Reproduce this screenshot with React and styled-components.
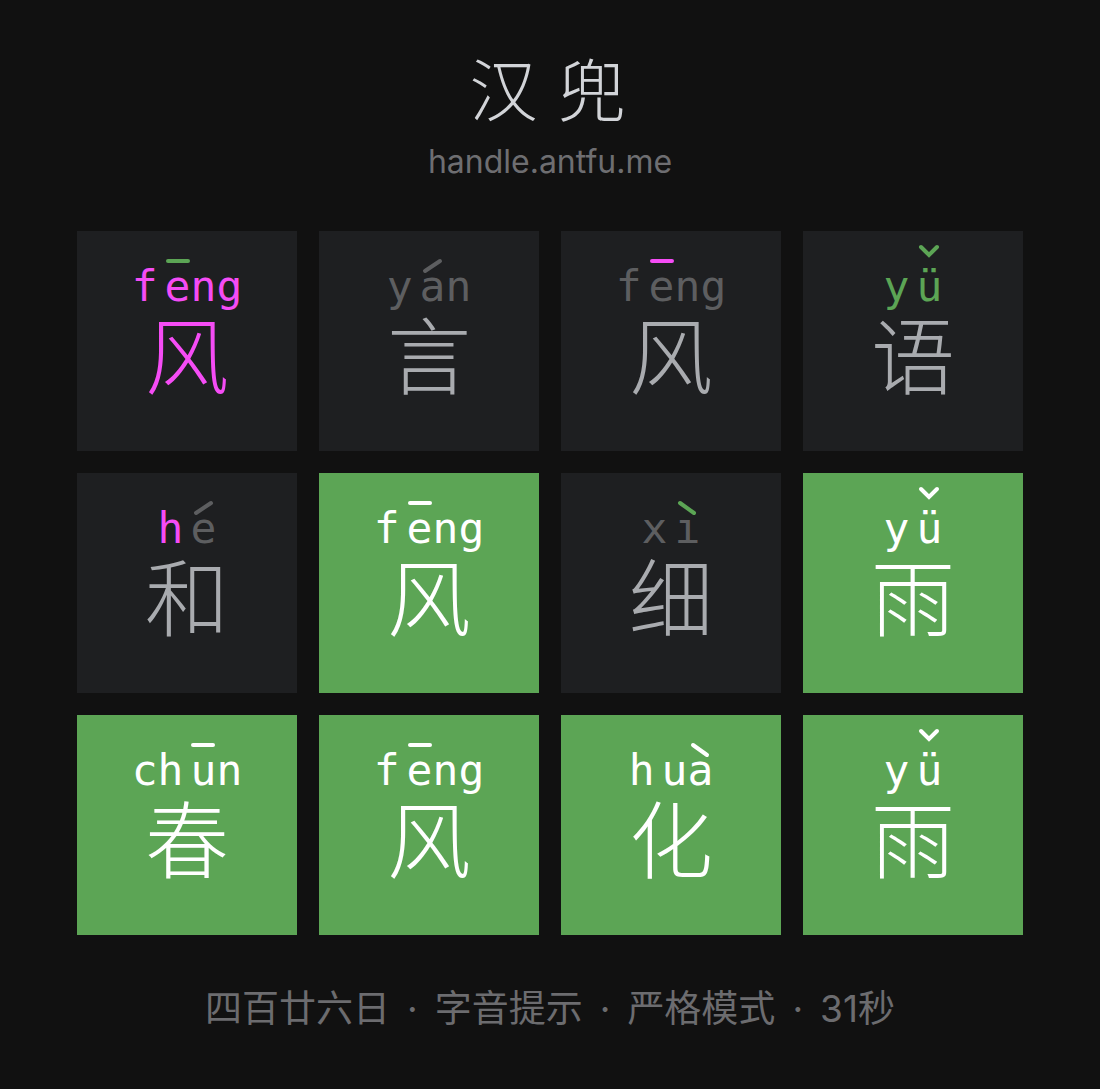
import React from "react";
import styled, { createGlobalStyle } from "styled-components";

const Global = createGlobalStyle`
  html, body { margin: 0; padding: 0; background: #111111; }
  body { font-family: "Inter", "Noto Sans CJK SC", sans-serif; }
`;

const C = {
  magenta: "#f54cf5",
  green: "#5ca555",
  gray: "#5d5e60",
  char: "#a9abaf",
  white: "#ffffff",
};

const Page = styled.div`
  width: 1100px;
  min-height: 1089px;
  display: flex;
  flex-direction: column;
  align-items: center;
  padding-top: 46px;
  box-sizing: border-box;
`;

const Title = styled.h1`
  margin: 0;
  font-family: "Noto Sans CJK SC", sans-serif;
  font-weight: 300;
  font-size: 68px;
  line-height: 82px;
  letter-spacing: 20px;
  padding-left: 15px;
  color: #d2d4d8;
`;

const Subtitle = styled.div`
  margin-top: 14px;
  font-family: "Inter", sans-serif;
  font-size: 32px;
  line-height: 40px;
  color: #6e6e71;
`;

const Grid = styled.div`
  margin-top: 49px;
  display: grid;
  grid-template-columns: repeat(4, 220px);
  grid-auto-rows: 220px;
  gap: 22px;
`;

const Cell = styled.div`
  background: ${(p) => (p.$ok ? C.green : "#1e1f21")};
  display: flex;
  flex-direction: column;
  align-items: center;
  padding-top: 30px;
  box-sizing: border-box;
`;

const Pinyin = styled.div`
  display: flex;
  align-items: baseline;
  gap: 7px;
  font-family: "DejaVu Sans Mono", monospace;
  font-size: 43px;
  line-height: 50px;
  height: 50px;
`;

const Part = styled.span`
  display: flex;
  color: ${(p) => p.$color};
`;

const Letter = styled.span`
  position: relative;
  color: ${(p) => p.$color};
`;

const ToneMark = styled.svg`
  position: absolute;
  left: 50%;
  top: ${(p) => p.$top}px;
  transform: translateX(-50%);
  overflow: visible;
`;

const Hanzi = styled.div`
  margin-top: -6px;
  font-family: "Noto Sans CJK SC", sans-serif;
  font-weight: 300;
  font-size: 84px;
  line-height: 94px;
  color: ${(p) => p.$color};
`;

const Footer = styled.div`
  margin-top: 49px;
  display: flex;
  align-items: center;
  font-family: "Inter", "Noto Sans CJK SC", sans-serif;
  font-size: 37px;
  line-height: 50px;
  color: #6c6c6f;
`;

const Dot = styled.span`
  margin: 0 17px;
`;

function Tone({ tone, color, umlaut }) {
  const top = umlaut ? -15 : -1;
  const sw = 4;
  let path;
  if (tone === 1) path = <line x1="-10" y1="0" x2="10" y2="0" />;
  else if (tone === 2) path = <line x1="-7" y1="10" x2="8" y2="0" />;
  else if (tone === 3) path = <polyline points="-8,0 0,8 8,0" />;
  else path = <line x1="-7" y1="0" x2="7" y2="10" />;
  return (
    <ToneMark
      $top={top}
      width="20"
      height="12"
      viewBox="-10 -1 20 12"
      stroke={color}
      strokeWidth={sw}
      strokeLinecap="round"
      fill="none"
    >
      {path}
    </ToneMark>
  );
}

const rows = [
  { ini: "f", fin: "eng", v: 0, tone: 1, ch: "风", ic: C.magenta, fc: C.magenta, tc: C.green, cc: C.magenta },
  { ini: "y", fin: "an", v: 0, tone: 2, ch: "言", ic: C.gray, fc: C.gray, tc: C.gray, cc: C.char },
  { ini: "f", fin: "eng", v: 0, tone: 1, ch: "风", ic: C.gray, fc: C.gray, tc: C.magenta, cc: C.char },
  { ini: "y", fin: "ü", v: 0, tone: 3, ch: "语", ic: C.green, fc: C.green, tc: C.green, cc: C.char },
  { ini: "h", fin: "e", v: 0, tone: 2, ch: "和", ic: C.magenta, fc: C.gray, tc: C.gray, cc: C.char },
  { ini: "f", fin: "eng", v: 0, tone: 1, ch: "风", ok: true },
  { ini: "x", fin: "ı", v: 0, tone: 4, ch: "细", ic: C.gray, fc: C.gray, tc: C.green, cc: C.char },
  { ini: "y", fin: "ü", v: 0, tone: 3, ch: "雨", ok: true },
  { ini: "ch", fin: "un", v: 0, tone: 1, ch: "春", ok: true },
  { ini: "f", fin: "eng", v: 0, tone: 1, ch: "风", ok: true },
  { ini: "h", fin: "ua", v: 1, tone: 4, ch: "化", ok: true },
  { ini: "y", fin: "ü", v: 0, tone: 3, ch: "雨", ok: true },
];

export default function App() {
  return (
    <>
      <Global />
      <Page>
        <Title>汉兜</Title>
        <Subtitle>handle.antfu.me</Subtitle>
        <Grid>
          {rows.map((r, i) => {
            const ic = r.ok ? C.white : r.ic;
            const fc = r.ok ? C.white : r.fc;
            const tc = r.ok ? C.white : r.tc;
            const cc = r.ok ? C.white : r.cc;
            return (
              <Cell key={i} $ok={r.ok}>
                <Pinyin>
                  <Part $color={ic}>{r.ini}</Part>
                  <Part $color={fc}>
                    {r.fin.split("").map((l, j) => (
                      <Letter key={j} $color={fc}>
                        {l}
                        {j === r.v && <Tone tone={r.tone} color={tc} umlaut={l === "ü"} />}
                      </Letter>
                    ))}
                  </Part>
                </Pinyin>
                <Hanzi $color={cc}>{r.ch}</Hanzi>
              </Cell>
            );
          })}
        </Grid>
        <Footer>
          <span>四百廿六日</span>
          <Dot>·</Dot>
          <span>字音提示</span>
          <Dot>·</Dot>
          <span>严格模式</span>
          <Dot>·</Dot>
          <span>31秒</span>
        </Footer>
      </Page>
    </>
  );
}
